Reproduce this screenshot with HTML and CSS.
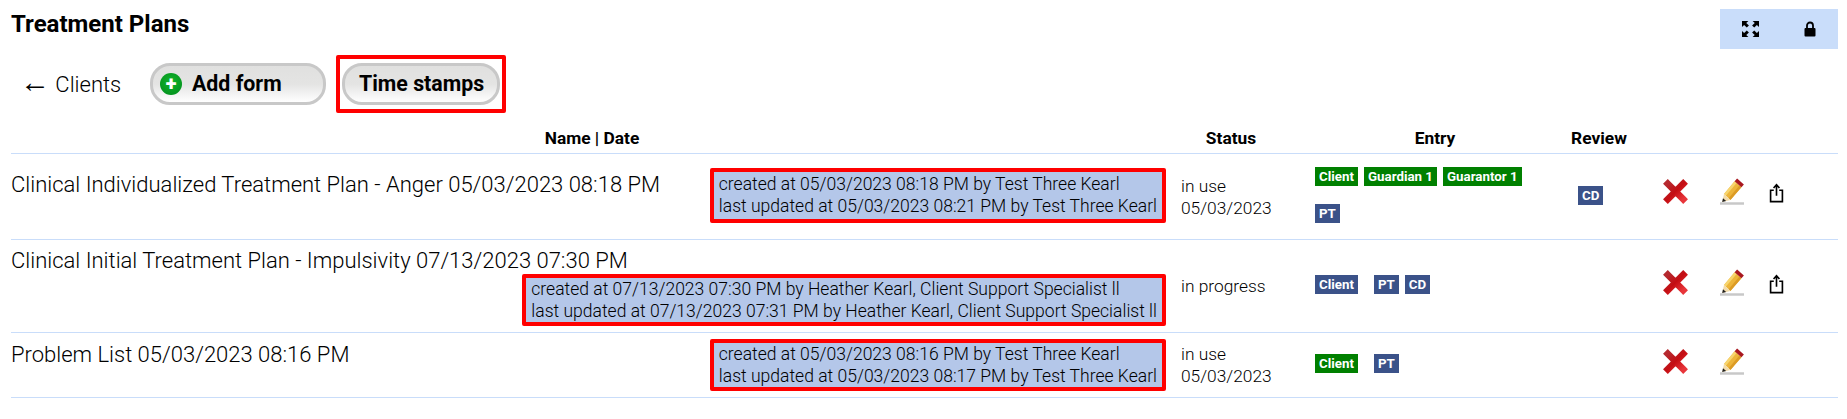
FILE: index.html
```html
<!DOCTYPE html>
<html lang="en">
<head>
    <meta charset="UTF-8">
    <title>Treatment Plans</title>
    <link rel="stylesheet" href="styles.css">
</head>
<body>

<svg class="defs" width="0" height="0">
  <defs>
    <linearGradient id="redx" x1="0" y1="0" x2="1" y2="1">
      <stop offset="0" stop-color="#b5292f"/>
      <stop offset="0.5" stop-color="#c40d12"/>
      <stop offset="1" stop-color="#e8353a"/>
    </linearGradient>
    <symbol id="icon-x" viewBox="0 0 26 26">
      <path d="M5 5 L21 21 M21 5 L5 21" fill="none" stroke="url(#redx)" stroke-width="7" stroke-linecap="square"/>
    </symbol>
    <symbol id="icon-pencil" viewBox="0 0 24 27">
      <path d="M0 25.5 H24" stroke="#c8c8c8" stroke-width="2.5"/>
      <path d="M4 15.9 L14.6 3.3 L21.4 9.3 L10.4 21.9 Z" fill="#edb53a"/>
      <path d="M4 15.9 L14.6 3.3 L16.6 5 L6 17.6 Z" fill="#f7d56e"/>
      <path d="M8.6 20.3 L19.4 7.5 L21.4 9.3 L10.4 21.9 Z" fill="#dc9b25"/>
      <path d="M2.2 24 L4 15.9 L10.4 21.9 Z" fill="#f3dcaa"/>
      <path d="M2.2 24 L3 20.2 L6.2 23 Z" fill="#222"/>
      <path d="M14.6 3.3 L17.1 0.4 L23.9 6.4 L21.4 9.3 Z" fill="#a8171f"/>
    </symbol>
    <symbol id="icon-share" viewBox="0 0 16 22">
      <path d="M5 8 H1.5 V20.5 H14.5 V8 H11" fill="none" stroke="#000" stroke-width="1.8"/>
      <path d="M8 14 V2.5 M4.8 5.5 L8 1.8 L11.2 5.5" fill="none" stroke="#000" stroke-width="1.8"/>
    </symbol>
  </defs>
</svg>

<div class="top">
  <h1>Treatment Plans</h1>
  <div class="viewbar">
    <svg width="17" height="16" viewBox="0 0 16 16" preserveAspectRatio="none">
      <path d="M0 0 H6 L4 2 L6.5 4.5 L4.5 6.5 L2 4 L0 6 Z M16 0 V6 L14 4 L11.5 6.5 L9.5 4.5 L12 2 L10 0 Z M0 16 V10 L2 12 L4.5 9.5 L6.5 11.5 L4 14 L6 16 Z M16 16 H10 L12 14 L9.5 11.5 L11.5 9.5 L14 12 L16 10 Z" fill="#000"/>
    </svg>
    <svg width="12" height="16" viewBox="0 0 12 16">
      <path d="M3 7 V4.5 A3 3 0 0 1 9 4.5 V7" fill="none" stroke="#000" stroke-width="1.8"/>
      <rect x="0.5" y="7" width="11" height="8.5" rx="1" fill="#000"/>
    </svg>
  </div>
</div>

<div class="actions">
  <a class="back"><span class="arrow">&larr;</span> Clients</a>
  <button class="btn btn-add">
    <span class="plus">+</span>
    Add form
  </button>
  <span class="redbox">
    <button class="btn">Time stamps</button>
  </span>
</div>

<table class="plans">
  <colgroup>
    <col class="col-name">
    <col class="col-status">
    <col class="col-entry">
    <col class="col-review">
    <col>
  </colgroup>
  <thead>
    <tr>
      <th>Name | Date</th>
      <th class="th-status">Status</th>
      <th class="th-entry">Entry</th>
      <th>Review</th>
      <th></th>
    </tr>
  </thead>
  <tbody>
    <tr class="row-1">
      <td>
        <div class="name-cell">
          <span class="plan-name">Clinical Individualized Treatment Plan - Anger 05/03/2023 08:18 PM</span>
          <div class="stamps">
            <div>created at 05/03/2023 08:18 PM by Test Three Kearl</div>
            <div>last updated at 05/03/2023 08:21 PM by Test Three Kearl</div>
          </div>
        </div>
      </td>
      <td class="status">in use<br>05/03/2023</td>
      <td class="entry">
        <div class="tags">
          <span class="tag green">Client</span>
          <span class="tag green">Guardian 1</span>
          <span class="tag green">Guarantor 1</span>
          <span class="tag blue">PT</span>
        </div>
      </td>
      <td class="review"><span class="tag blue">CD</span></td>
      <td>
        <div class="icons">
          <svg class="ic-x"><use href="#icon-x"/></svg>
          <svg class="ic-pencil"><use href="#icon-pencil"/></svg>
          <svg class="ic-share"><use href="#icon-share"/></svg>
        </div>
      </td>
    </tr>
    <tr class="row-2">
      <td>
        <div class="name-cell">
          <span class="plan-name">Clinical Initial Treatment Plan - Impulsivity 07/13/2023 07:30 PM</span>
          <div class="stamps">
            <div>created at 07/13/2023 07:30 PM by Heather Kearl, Client Support Specialist ll</div>
            <div>last updated at 07/13/2023 07:31 PM by Heather Kearl, Client Support Specialist ll</div>
          </div>
        </div>
      </td>
      <td class="status">in progress</td>
      <td class="entry">
        <div class="tags">
          <span class="tag blue wide">Client</span>
          <span class="tag blue">PT</span>
          <span class="tag blue">CD</span>
        </div>
      </td>
      <td class="review"></td>
      <td>
        <div class="icons">
          <svg class="ic-x"><use href="#icon-x"/></svg>
          <svg class="ic-pencil"><use href="#icon-pencil"/></svg>
          <svg class="ic-share"><use href="#icon-share"/></svg>
        </div>
      </td>
    </tr>
    <tr class="row-3">
      <td>
        <div class="name-cell">
          <span class="plan-name">Problem List 05/03/2023 08:16 PM</span>
          <div class="stamps">
            <div>created at 05/03/2023 08:16 PM by Test Three Kearl</div>
            <div>last updated at 05/03/2023 08:17 PM by Test Three Kearl</div>
          </div>
        </div>
      </td>
      <td class="status">in use<br>05/03/2023</td>
      <td class="entry">
        <div class="tags">
          <span class="tag green wide">Client</span>
          <span class="tag blue">PT</span>
        </div>
      </td>
      <td class="review"></td>
      <td>
        <div class="icons">
          <svg class="ic-x"><use href="#icon-x"/></svg>
          <svg class="ic-pencil"><use href="#icon-pencil"/></svg>
        </div>
      </td>
    </tr>
  </tbody>
</table>

</body>
</html>
```

FILE: styles.css
```css
body {
  margin: 0;
  padding: 0 9px 0 11px;
  background-color: #fff;
  color: #000;
  font-family: Roboto, 'Liberation Sans', sans-serif;
}

.defs {
  position: absolute;
}

.top {
  display: flex;
  justify-content: space-between;
  align-items: flex-start;
  height: 55px;
}

.top h1 {
  margin: 11px 0 0;
  font-size: 24px;
  line-height: 26px;
  font-weight: 700;
}

.viewbar {
  display: flex;
  align-items: center;
  justify-content: space-around;
  width: 118px;
  height: 40px;
  margin-top: 9px;
  background-color: #c9ddfa;
}

.actions {
  display: flex;
  align-items: center;
  height: 57px;
  padding-left: 9px;
}

.back {
  width: 130px;
  font-size: 22px;
  font-weight: 300;
}

.arrow {
  font-size: 30px;
  line-height: 24px;
}

.btn {
  height: 42px;
  padding: 0 13px 0 14px;
  border: 3px solid #c8c8c8;
  border-radius: 20px;
  background: linear-gradient(#e0e0df, #e4e4e3 50%, #fff);
  color: #000;
  font-family: Roboto, 'Liberation Sans', sans-serif;
  font-size: 21.33px;
  font-weight: 700;
  white-space: nowrap;
}

.btn-add {
  display: flex;
  align-items: center;
  gap: 10px;
  width: 176px;
  padding-left: 7px;
}

.plus {
  display: block;
  width: 22px;
  height: 22px;
  border-radius: 50%;
  background: radial-gradient(circle at 50% 40%, #12b52a, #008a1c);
  color: #fff;
  font-size: 20px;
  line-height: 21px;
  font-weight: 900;
  text-align: center;
}

.redbox {
  display: block;
  margin-left: 10px;
  padding: 4px 2px;
  border: 4px solid #f00;
  border-radius: 2px;
}

.plans {
  width: 100%;
  table-layout: fixed;
  border-collapse: collapse;
}

.col-name { width: 1162px; }
.col-status { width: 134px; }
.col-entry { width: 234px; }
.col-review { width: 116px; }

.plans th {
  box-sizing: border-box;
  height: 41px;
  padding: 12px 0 0;
  font-size: 17.33px;
  font-weight: 700;
  text-align: center;
  border-bottom: 1px solid #c9ddfa;
}

.plans th.th-status { padding-right: 18px; }
.plans th.th-entry { padding-left: 22px; }

.plans td {
  box-sizing: border-box;
  padding: 0;
  vertical-align: top;
  border-bottom: 1px solid #c9ddfa;
}

.row-1 td { height: 86px; }
.row-2 td { height: 93px; }
.row-3 td { height: 65px; }

.name-cell {
  display: flex;
  flex-wrap: wrap;
  justify-content: space-between;
  align-items: flex-start;
}

.plan-name {
  padding-top: 19px;
  font-size: 22px;
  line-height: 24px;
  font-weight: 300;
}

.row-2 .plan-name { padding-top: 9px; }
.row-3 .plan-name { padding-top: 10px; }

.stamps {
  margin: 14px 7px 0 auto;
  padding: 0 5px;
  border: 4px solid #f00;
  border-radius: 2px;
  background-color: #b4c7e9;
  font-size: 17.55px;
  line-height: 22px;
  font-weight: 300;
}

.row-1 .stamps { padding-top: 1px; padding-bottom: 2px; }
.row-2 .stamps { margin-top: 1px; }
.row-3 .stamps { margin-top: 6px; }

.plans td.status {
  padding: 21px 0 0 8px;
  font-size: 17.33px;
  line-height: 22px;
  font-weight: 300;
}

.plans .row-2 td.status { padding-top: 35px; }
.plans .row-3 td.status { padding-top: 10px; }

.plans td.entry { padding: 13px 0 0 8px; }
.plans .row-2 td.entry { padding-top: 35px; }
.plans .row-3 td.entry { padding-top: 21px; }

.tags {
  display: flex;
  flex-wrap: wrap;
  gap: 18px 6px;
}

.tag {
  display: block;
  width: fit-content;
  height: 19px;
  padding: 0 4px;
  color: #fff;
  font-size: 13.33px;
  line-height: 19px;
  font-weight: 700;
}

.tag.wide {
  margin-right: 10px;
}

.green { background-color: #008000; }
.blue { background-color: #3b5289; }

.plans td.review { padding: 32px 0 0 37px; }

.icons {
  display: flex;
  align-items: center;
  gap: 32px;
  padding: 24px 0 0 6px;
}

.row-2 .icons { padding-top: 29px; }
.row-3 .icons { padding-top: 15px; }

.ic-x { width: 25px; height: 27px; filter: blur(0.4px); }
.ic-pencil { width: 24px; height: 27px; filter: blur(0.3px); }
.ic-share { width: 15px; height: 20px; margin: 3px 0 0 -7px; }
```
